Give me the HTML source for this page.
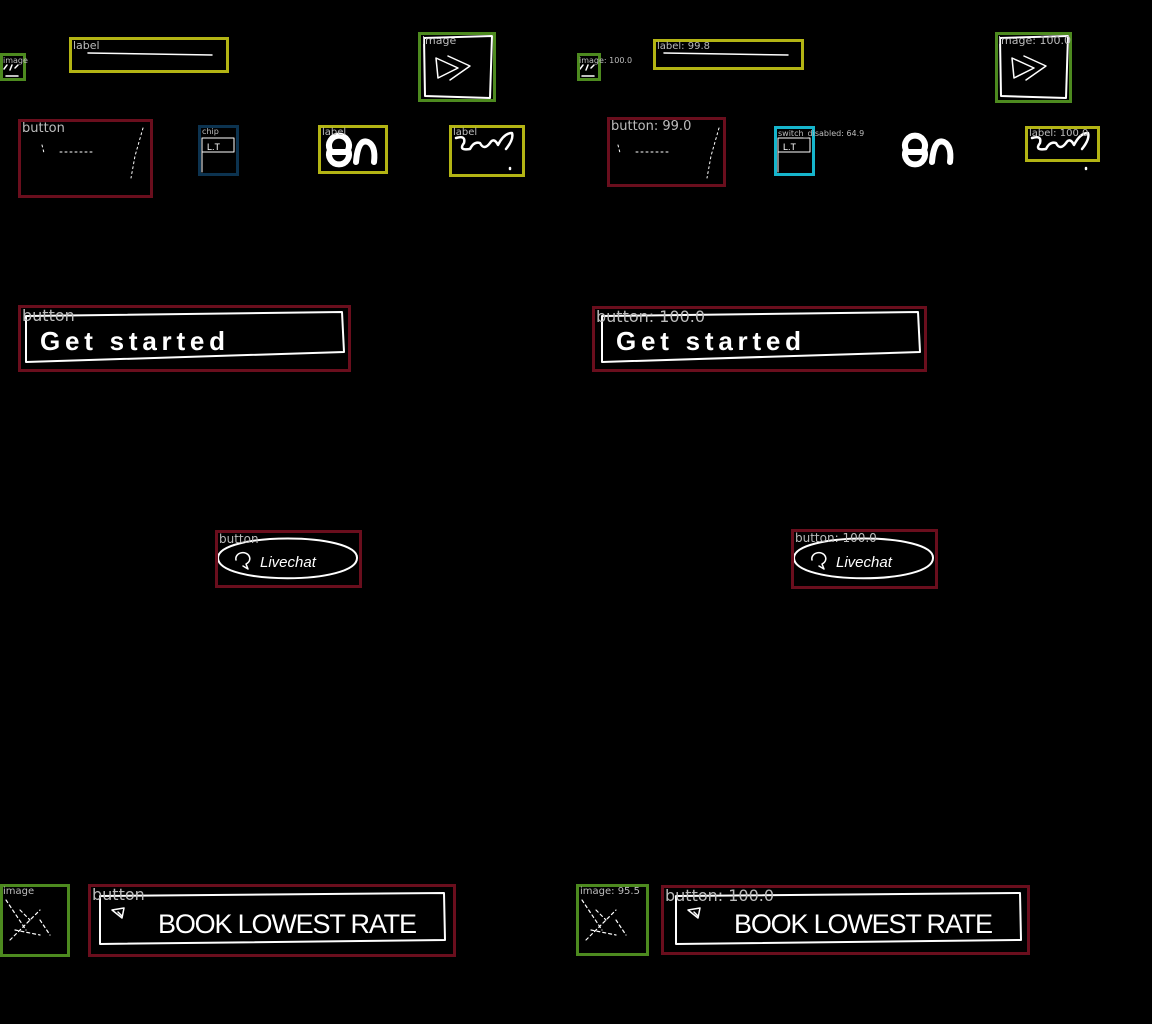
<!DOCTYPE html>
<html><head><meta charset="utf-8"><style>
html,body{margin:0;padding:0;background:#000;width:1152px;height:1024px;overflow:hidden}
.b{position:absolute;box-sizing:border-box;border:3px solid}
.y{border-color:#b3b414}.g{border-color:#4d8a1f}.m{border-color:#6a0e1d}.d{border-color:#0c3350}.c{border-color:#16b5cc}
.l{position:absolute;font-family:"DejaVu Sans","Liberation Sans",sans-serif;color:#bdbdbd;white-space:nowrap;line-height:1}
svg{position:absolute;left:0;top:0}
</style></head><body>
<svg width="1152" height="1024" viewBox="0 0 1152 1024">
<defs>
<g id="s" fill="none" stroke="#fff" stroke-width="2" stroke-linecap="round" stroke-linejoin="round">
 <path d="M4 69 l3 -4 M10 70 l2 -5 M15 68 l3 -3 M6 76 h12" stroke-width="1.5"/>
 <path d="M88 53 L212 55" stroke-width="1.5"/>
 <path d="M424 38 L492 36 L490 98 L425 96 Z" />
 <path d="M436 58 L458 68 L438 78 Z M448 56 L470 66 L450 80" stroke-width="1.5"/>
 <path d="M42 145 l2 8 M60 152 h35 M143 128 l-8 28 l-4 22" stroke-width="1" stroke-dasharray="2 3"/>
 <path d="M202 138 h32 v14 h-32 Z M202 138 v34" stroke-width="1"/>
 <path d="M330 150 a10 10 0 1 0 18 0 a10 10 0 1 0 -18 0 M332 152 h14 M356 162 q2 -24 12 -20 q8 4 6 20" stroke-width="6"/>
 <path d="M456 138 q10 -3 8 5 q-6 8 6 6 q4 -8 10 -6 q4 8 10 0 q4 -6 8 2 q6 -12 14 -12 q2 6 -6 16 M510 168 v1" stroke-width="2.5"/>
 <path d="M26 316 L342 312 L344 352 L26 362 Z"/>
 <path d="M218 558 C218 532 358 532 357 558 C357 585 218 585 218 558 Z"/>
 <path d="M236 560 a7 6 0 1 1 10 4 l2 5 l-5 -3" stroke-width="1.5"/>
 <path d="M6 900 l20 30 M10 940 l30 -30 M20 910 l10 10 M40 920 l10 15 M15 930 l25 5" stroke-width="1.2" stroke-dasharray="3 3"/>
 <path d="M100 896 L444 893 L445 940 L100 944 Z"/>
 <path d="M112 910 l12 -2 l-2 10 Z M118 912 l4 4" stroke-width="1.5"/>
</g>
<g id="t" fill="#fff" font-family="Liberation Sans,sans-serif">
 <text x="40" y="350" font-size="26" font-weight="bold" textLength="185" lengthAdjust="spacing">Get started</text>
 <text x="260" y="567" font-size="15" font-style="italic">Livechat</text>
 <text x="158" y="933" font-size="27" letter-spacing="1" textLength="260">BOOK LOWEST RATE</text>
 <text x="207" y="150" font-size="9">L.T</text>
</g>
</defs>
<use href="#s"/><use href="#t"/>
<use href="#s" x="576"/><use href="#t" x="576"/>
</svg>

<div class="b g" style="left:0;top:53px;width:26px;height:28px"></div><div class="l" style="left:3px;top:57px;font-size:8px">image</div>
<div class="b y" style="left:69px;top:37px;width:160px;height:36px"></div><div class="l" style="left:73px;top:40px;font-size:11px">label</div>
<div class="b g" style="left:418px;top:32px;width:78px;height:70px"></div><div class="l" style="left:422px;top:35px;font-size:11px">image</div>
<div class="b m" style="left:18px;top:119px;width:135px;height:79px"></div><div class="l" style="left:22px;top:122px;font-size:13px">button</div>
<div class="b d" style="left:198px;top:125px;width:41px;height:51px"></div><div class="l" style="left:202px;top:128px;font-size:8px">chip</div>
<div class="b y" style="left:318px;top:125px;width:70px;height:49px"></div><div class="l" style="left:322px;top:128px;font-size:10px">label</div>
<div class="b y" style="left:449px;top:125px;width:76px;height:52px"></div><div class="l" style="left:453px;top:128px;font-size:10px">label</div>
<div class="b m" style="left:18px;top:305px;width:333px;height:67px"></div><div class="l" style="left:22px;top:308px;font-size:16px">button</div>
<div class="b m" style="left:215px;top:530px;width:147px;height:58px"></div><div class="l" style="left:219px;top:533px;font-size:12px">button</div>
<div class="b g" style="left:0;top:884px;width:70px;height:73px"></div><div class="l" style="left:3px;top:887px;font-size:10px">image</div>
<div class="b m" style="left:88px;top:884px;width:368px;height:73px"></div><div class="l" style="left:92px;top:887px;font-size:16px">button</div>

<div class="b g" style="left:577px;top:53px;width:24px;height:28px"></div><div class="l" style="left:579px;top:57px;font-size:8px">image: 100.0</div>
<div class="b y" style="left:653px;top:39px;width:151px;height:31px"></div><div class="l" style="left:657px;top:42px;font-size:10px">label: 99.8</div>
<div class="b g" style="left:995px;top:32px;width:77px;height:71px"></div><div class="l" style="left:998px;top:35px;font-size:11px">image: 100.0</div>
<div class="b m" style="left:607px;top:117px;width:119px;height:70px"></div><div class="l" style="left:611px;top:120px;font-size:13px">button: 99.0</div>
<div class="b c" style="left:774px;top:126px;width:41px;height:50px"></div><div class="l" style="left:778px;top:130px;font-size:8px">switch_disabled: 64.9</div>
<div class="b y" style="left:1025px;top:126px;width:75px;height:36px"></div><div class="l" style="left:1029px;top:129px;font-size:10px">label: 100.0</div>
<div class="b m" style="left:592px;top:306px;width:335px;height:66px"></div><div class="l" style="left:596px;top:309px;font-size:16px">button: 100.0</div>
<div class="b m" style="left:791px;top:529px;width:147px;height:60px"></div><div class="l" style="left:795px;top:532px;font-size:12px">button: 100.0</div>
<div class="b g" style="left:576px;top:884px;width:73px;height:72px"></div><div class="l" style="left:580px;top:887px;font-size:10px">image: 95.5</div>
<div class="b m" style="left:661px;top:885px;width:369px;height:70px"></div><div class="l" style="left:665px;top:888px;font-size:16px">button: 100.0</div>
</body></html>
